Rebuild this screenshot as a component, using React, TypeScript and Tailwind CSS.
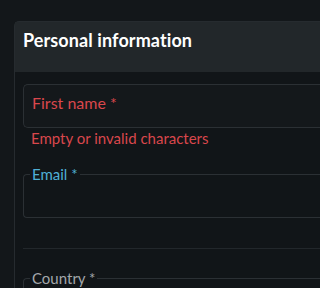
export default function App() {
  return (
    <div className="w-full min-w-[288px] h-screen min-h-[288px] overflow-hidden bg-[#13171a] pt-[21px] pl-[14px] font-['Lato',sans-serif]">
      <div className="rounded-tl-[5px] border-l border-t border-[#262b2f]">
        {/* Header */}
        <div className="h-[50px] bg-[#22272a] px-[8px] pt-[4px]">
          <h2 className="text-[18px] leading-[28px] font-bold text-white tracking-[0.1px]">Personal information</h2>
        </div>

        {/* Body */}
        <div className="bg-[#111518] pl-[8px] pt-[12px] pb-[40px]">
          <div className="h-[44px] rounded-l-[5px] border-l border-y border-[#2b3034] bg-[#14181b] pl-[8px] pt-[6px]">
            <span className="text-[16px] leading-[24px] text-[#d9474c]">First name *</span>
          </div>
          <p className="pl-[8px] text-[15px] leading-[20px] text-[#d9474c]">Empty or invalid characters</p>

          <fieldset className="mt-[16px] h-[54px] rounded-l-[4px] border-l border-y border-[#2b3034]">
            <legend className="ml-[6px] px-[2px] text-[15px] leading-[20px] text-[#4fb0d6]">Email *</legend>
          </fieldset>

          <div className="mt-[30px] border-t border-[#22272b]" />

          <fieldset className="mt-[19px] h-[54px] rounded-l-[4px] border-l border-y border-[#2b3034]">
            <legend className="ml-[6px] px-[2px] text-[15px] leading-[20px] text-[#a3a7ab]">Country *</legend>
          </fieldset>
        </div>
      </div>
    </div>
  )
}
